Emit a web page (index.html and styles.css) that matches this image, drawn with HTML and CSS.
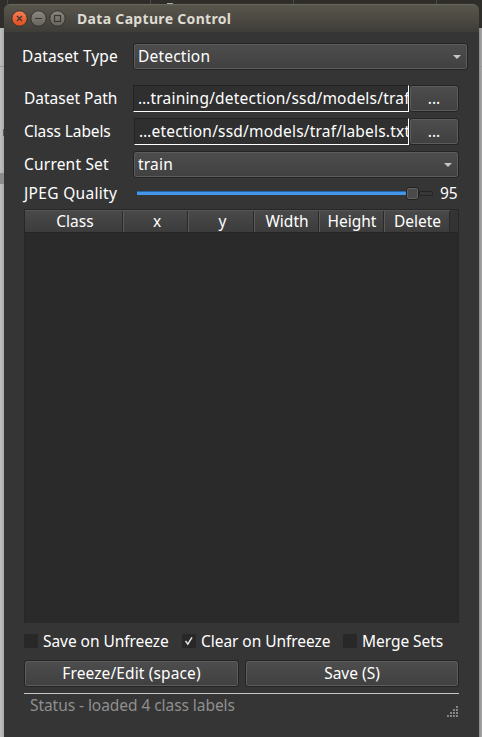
FILE: index.html
```
<!DOCTYPE html>
<html lang="en">
<head>
<meta charset="utf-8">
<title>Data Capture Control</title>
<link rel="stylesheet" href="styles.css">
</head>
<body>
<div class="window">
  <header class="titlebar">
    <svg class="controls" width="56" height="18" viewBox="0 0 56 18">
      <defs>
        <linearGradient id="red" x1="0" y1="0" x2="0" y2="1"><stop offset="0" stop-color="#f58057"/><stop offset="1" stop-color="#df4c1b"/></linearGradient>
        <linearGradient id="gray" x1="0" y1="0" x2="0" y2="1"><stop offset="0" stop-color="#8a8880"/><stop offset="1" stop-color="#66645d"/></linearGradient>
      </defs>
      <g stroke="#35332d" stroke-width="1">
        <circle cx="8.5" cy="8.500" r="7.700" fill="url(#red)"/>
        <circle cx="27.5" cy="8.500" r="7.700" fill="url(#gray)"/>
        <circle cx="46.5" cy="8.500" r="7.700" fill="url(#gray)"/>
      </g>
      <g fill="none" stroke="#3c3630" stroke-width="1.200">
        <path d="M6 6l5 5M11 6l-5 5"/>
        <path d="M24 8.500h7"/>
        <rect x="43.500" y="5.500" width="6" height="6"/>
      </g>
    </svg>
    <h1 class="title">Data Capture Control</h1>
  </header>
  <main class="content">
    <div class="row type-row"><label>Dataset Type</label><div class="combo"><span class="loose">Detection</span><i class="arrow"></i></div></div>
    <div class="row path-row"><label>Dataset Path</label><div class="field">…training/detection/ssd/models/traf</div><button class="btn browse">...</button></div>
    <div class="row labels-row"><label class="tight">Class Labels</label><div class="field">…etection/ssd/models/traf/labels.txt</div><button class="btn browse">...</button></div>
    <div class="row set-row"><label class="loose">Current Set</label><div class="combo"><span class="loose">train</span><i class="arrow"></i></div></div>
    <div class="row quality-row"><label>JPEG Quality</label><div class="slider"><div class="fill"></div><div class="handle"></div><div class="rest"></div></div><span class="value">95</span></div>
    <section class="table">
      <div class="thead"><div>Class</div><div>x</div><div>y</div><div>Width</div><div>Height</div><div>Delete</div></div>
    </section>
    <div class="checks">
      <label><i class="box"></i><span>Save on Unfreeze</span></label>
      <label><i class="box"><svg width="14" height="14" viewBox="0 0 14 14"><path d="M3.500 6.800l2.300 3.400L10 3.300" fill="none" stroke="#e4e4e4" stroke-width="1.500"/></svg></i><span>Clear on Unfreeze</span></label>
      <label><i class="box"></i><span>Merge Sets</span></label>
    </div>
    <div class="actions"><button class="btn freeze">Freeze/Edit (space)</button><button class="btn">Save (S)</button></div>
    <footer class="status"><span>Status - loaded 4 class labels</span>
      <svg width="12" height="12" viewBox="0 0 12 12" fill="#858585"><path d="M9 0h2v2h-2zM6 3h2v2h-2zM9 3h2v2h-2zM3 6h2v2h-2zM6 6h2v2h-2zM9 6h2v2h-2zM0 9h2v2h-2zM3 9h2v2h-2zM6 9h2v2h-2zM9 9h2v2h-2z"/></svg>
    </footer>
  </main>
</div>
</body>
</html>
```
FILE: styles.css
```
* { box-sizing: border-box; }
body {
  margin: 0; width: 482px; height: 737px; overflow: hidden; padding: 4px 3px 0 4px;
  font: 15.5px/20px "Noto Sans", sans-serif; color: #fff;
  background:
    linear-gradient(#4a4a48, #4a4a48) 7px 0 / 1px 4px no-repeat,
    linear-gradient(#4a4a48, #4a4a48) 150px 0 / 1px 4px no-repeat,
    linear-gradient(#aaa, #aaa) 167px 3px / 6px 1px no-repeat,
    linear-gradient(#4a4a48, #4a4a48) 293px 0 / 1px 4px no-repeat,
    linear-gradient(#4a4a48, #4a4a48) 436px 0 / 1px 4px no-repeat,
    linear-gradient(#2f2e2b, #2f2e2b) 0 0 / 482px 28px no-repeat,
    linear-gradient(#999, #999) 0 66px / 482px 1px no-repeat,
    linear-gradient(#6b5a4e, #6b5a4e) 3px 129px / 1px 7px no-repeat,
    linear-gradient(#8c8c8c, #8c8c8c) 0 173px / 4px 11px no-repeat,
    linear-gradient(90deg, #bec0c2, #a9abad 4px, #a9abad 478px, #888 479px, #aaa 482px);
}
span, label, .field { white-space: pre; }
.window { width: 475px; height: 733px; background: #353535; border-radius: 6px 6px 0 0; overflow: hidden; }
.titlebar { height: 28px; display: flex; align-items: center; padding-left: 7px; background: linear-gradient(#59564c, #3e3d38); border-top: 1px solid #68665d; }
.controls { display: block; margin-top: 1px; }
.title { margin: 0 0 0 10px; font-size: 14px; line-height: 20px; font-weight: 700; letter-spacing: .32px; color: #dfdbd2; }
.content { padding: 11px 20px 0; }
.row { display: flex; align-items: center; }
.row > label { width: 109px; flex: none; position: relative; top: -1px; }
.type-row { height: 27px; margin: 0 -9px 15px -2px; }
.type-row > label { width: 111px; letter-spacing: .1px; }
.path-row { height: 27px; margin-bottom: 6px; }
.labels-row { height: 27px; margin-bottom: 6px; }
.labels-row > .tight { letter-spacing: -.1px; }
.set-row { height: 27px; margin-bottom: 5px; }
.loose { letter-spacing: .2px; }
.combo, .btn { border: 1px solid #242424; border-radius: 3px; background: linear-gradient(#4d4d4d, #404040); box-shadow: inset 0 0 0 1px #5c5c5c; color: #fff; }
.combo { height: 27px; flex: 1; display: flex; align-items: center; justify-content: space-between; padding: 0 6px 2px 4px; }
.arrow { width: 8px; height: 4px; background: #c6c6c6; clip-path: polygon(0 0, 100% 0, 50% 100%); margin-top: 3px; }
.field { width: 276px; height: 27px; background: #2f2f2f; border: 1px solid #232323; border-right-color: #fff; border-bottom-color: #fff; padding: 2px 0 0 4px; overflow: hidden; letter-spacing: .2px; }
.labels-row .field { width: 275px; margin-left: 1px; }
.btn { font: inherit; padding: 0 0 1px; height: 27px; }
.browse { width: 50px; }
.quality-row { height: 20px; margin-bottom: 6px; }
.quality-row > label { letter-spacing: .32px; top: 0; }
.slider { width: 300px; height: 14px; display: flex; align-items: center; padding-left: 4px; }
.fill { width: 269px; height: 4px; background: #4297ec; border: solid #2467a9; border-width: 1px 0 0; }
.handle { width: 13px; height: 13px; border: 1px solid #222; border-radius: 3px; background: #4a4a4a; box-shadow: inset 0 0 0 1px #626262; }
.rest { width: 14px; height: 5px; border: 1px solid #252525; background: #373737; border-radius: 0 2px 2px 0; }
.value { margin-left: 7px; }
.table { height: 414px; background: #2a2a2a; border: 1px solid #272727; border-bottom: 0; }
.thead { display: grid; grid-template-columns: 99px 65px 66px 65px 65px 65px 1fr; height: 23px; background: #333; border-bottom: 1px solid #242424; }
.thead > div { display: flex; justify-content: center; background: linear-gradient(#494949, #3c3c3c); border-top: 1px solid #555; border-right: 1px solid #5a5a5a; box-shadow: inset -1px 0 #292929; }
.thead > div:nth-child(-n+3) { padding-left: 2px; }
.thead > div:last-child { border-right: 0; }
.checks { height: 20px; margin-top: 8px; display: grid; grid-template-columns: 158px 161px 1fr; letter-spacing: -.05px; }
.checks label { display: flex; align-items: center; }
.box { width: 14px; height: 14px; background: #282828; margin-right: 5px; }
.box svg { display: block; }
.actions { display: grid; grid-template-columns: 215px 214px; gap: 6px; margin-top: 9px; }
.freeze { letter-spacing: .12px; }
.status { height: 25px; margin-top: 6px; border-top: 1px solid #c5c5c5; display: flex; justify-content: space-between; color: #8f8f8f; padding: 1px 0 0 6px; letter-spacing: -.06px; }
.status svg { margin-top: 11px; }
```
